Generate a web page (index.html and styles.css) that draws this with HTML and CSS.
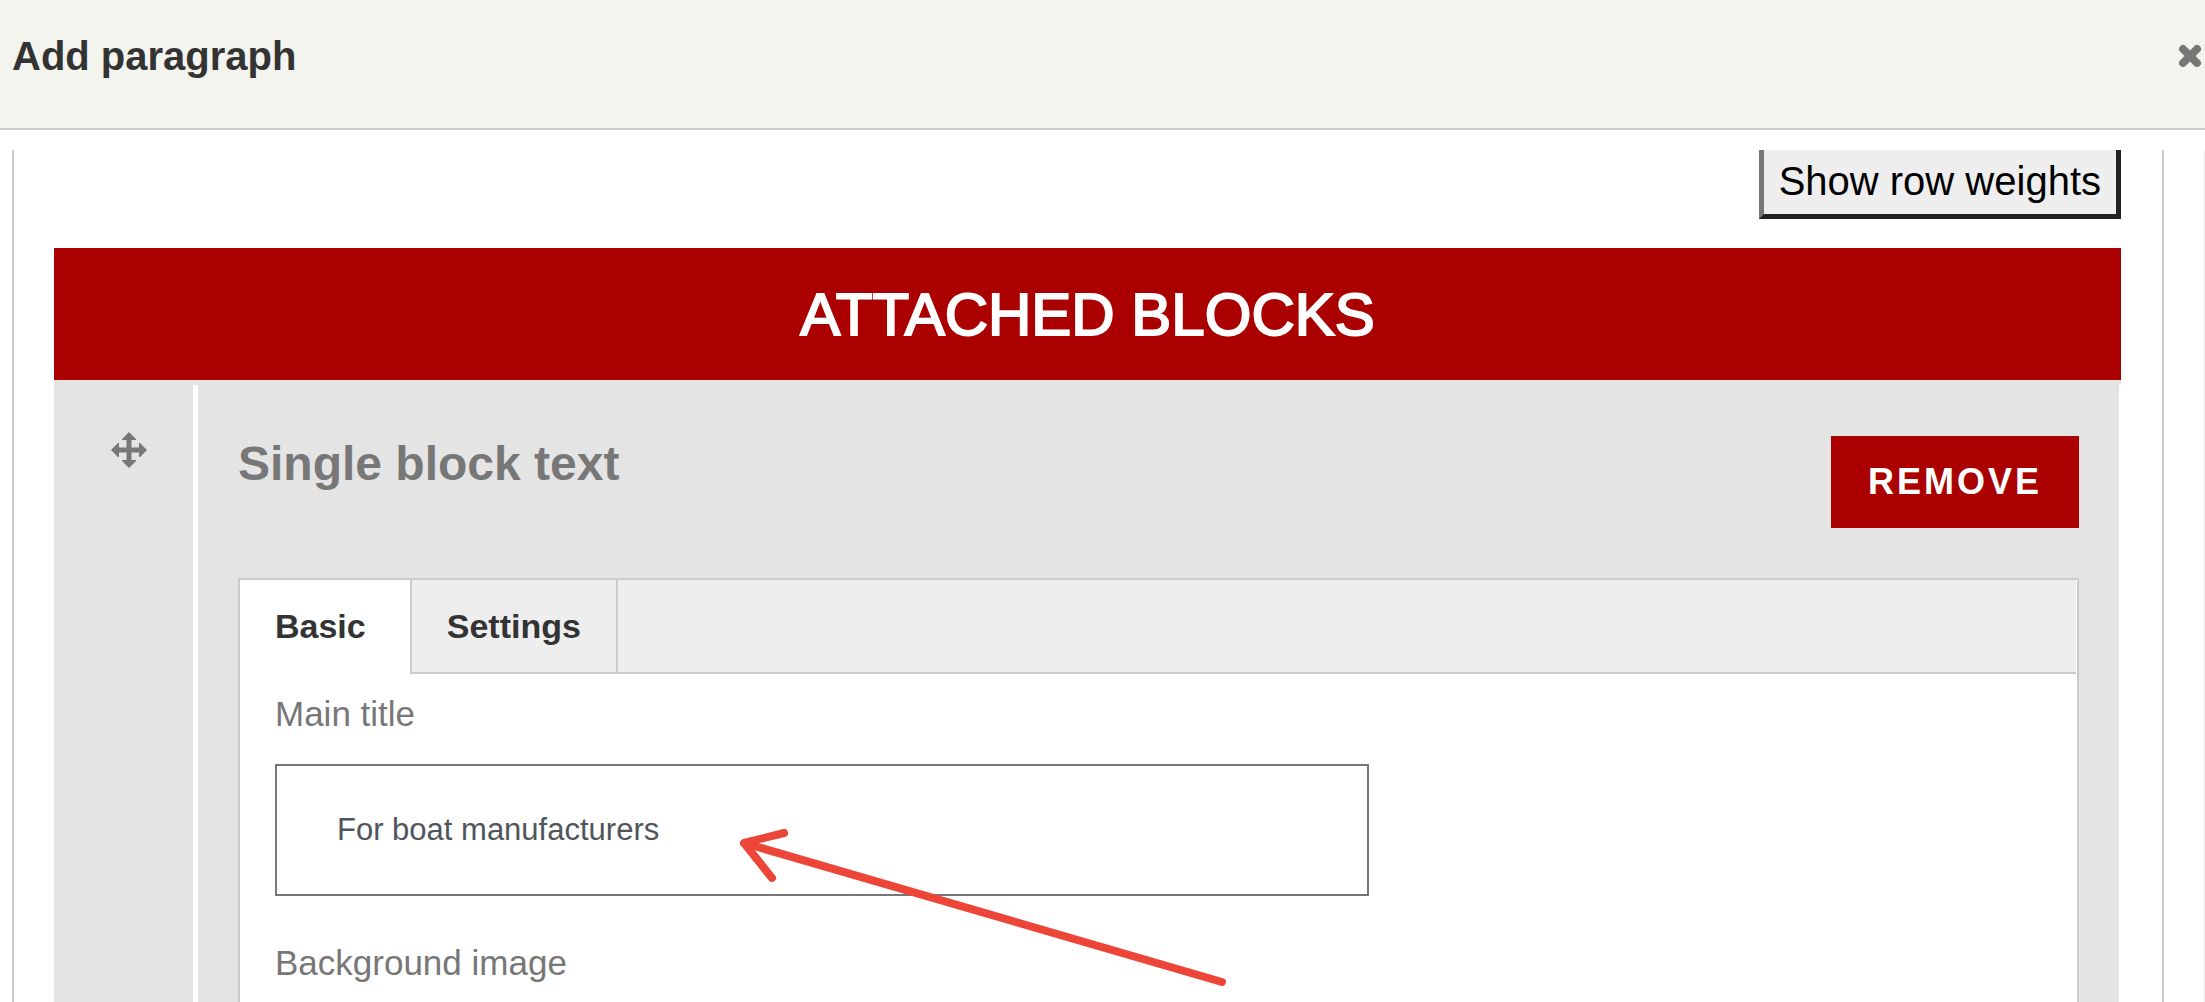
FILE: index.html
```html
<!DOCTYPE html>
<html lang="en">
<head>
    <meta charset="utf-8">
    <title>Add paragraph</title>
    <link rel="stylesheet" href="styles.css">
</head>
<body>
    <div class="dialog">
        <header class="dialog-titlebar">
            <h1 class="dialog-title">Add paragraph</h1>
            <button type="button" class="dialog-close" aria-label="Close">
                <svg width="24" height="24" viewBox="0 0 24 24">
                    <path d="M5 5L19 19M19 5L5 19" stroke="#777" stroke-width="8" stroke-linecap="round"/>
                </svg>
            </button>
        </header>
        <div class="dialog-content">
            <div class="field-wrapper">
                <div class="weight-toggle">
                    <button type="button" class="weight-button">Show row weights</button>
                </div>
                <table class="blocks">
                    <thead>
                        <tr>
                            <th colspan="2">ATTACHED BLOCKS</th>
                        </tr>
                    </thead>
                    <tbody>
                        <tr>
                            <td class="drag-cell">
                                <a href="#" class="drag-handle" aria-label="Drag to re-order">
                                    <svg width="36" height="36" viewBox="0 0 36 36">
                                        <path fill="#777" d="M18 0L25 7V8H20.500V15.500H28V11H29L36 18L29 25H28V20.500H20.500V28H25V29L18 36L11 29V28H15.500V20.500H8V25H7L0 18L7 11H8V15.500H15.500V8H11V7Z"/>
                                    </svg>
                                </a>
                            </td>
                            <td class="block-cell">
                                <div class="block-top">
                                    <h2 class="block-type">Single block text</h2>
                                    <button type="button" class="remove-button">REMOVE</button>
                                </div>
                                <div class="tabs">
                                    <nav class="tabs-menu">
                                        <a href="#basic" class="tab selected">Basic</a>
                                        <a href="#settings" class="tab">Settings</a>
                                    </nav>
                                    <div class="tabs-pane" id="basic">
                                        <label for="main-title">Main title</label>
                                        <div class="input-wrapper">
                                            <input type="text" id="main-title" value="For boat manufacturers">
                                            <svg class="arrow" width="490" height="160" viewBox="0 0 490 160">
                                                <path d="M484 154L6 15L46 5M6 15L34 50" fill="none" stroke="#ee4539" stroke-width="8" stroke-linecap="round" stroke-linejoin="round"/>
                                            </svg>
                                        </div>
                                        <div class="label">Background image</div>
                                    </div>
                                </div>
                            </td>
                        </tr>
                    </tbody>
                </table>
            </div>
        </div>
    </div>
</body>
</html>
```
FILE: styles.css
```css
* {
    box-sizing: border-box;
}

body {
    margin: 0;
    font-family: "Liberation Sans", Arial, sans-serif;
    font-size: 35px;
    line-height: 40px;
    color: #777;
    background: #fff;
}

h1, h2 {
    margin: 0;
}

button {
    font-family: inherit;
}

a {
    text-decoration: none;
}

svg {
    display: block;
}

.dialog {
    display: flex;
    flex-direction: column;
    height: 100vh;
    overflow: hidden;
}

/* title bar */
.dialog-titlebar {
    display: flex;
    flex: none;
    justify-content: space-between;
    align-items: flex-start;
    padding: 32px 3px 48px 12px;
    border-bottom: 2px solid #ccc;
    background: #f3f4ee;
}

.dialog-title {
    font-size: 40px;
    line-height: 48px;
    color: #333;
}

.dialog-close {
    padding: 12px 0;
    border: 0;
    background: none;
}

/* scrolled area */
.dialog-content {
    flex: 1;
    min-height: 0;
    margin-top: 20px;
    padding: 0 40px 0 12px;
    border-right: 1px solid #eee;
    overflow: hidden;
}

.field-wrapper {
    margin-top: -6px;
    padding: 0 41px 0 40px;
    border: solid #ccc;
    border-width: 0 2px;
}

.weight-toggle {
    display: flex;
    justify-content: flex-end;
    margin-bottom: 29px;
}

.weight-button {
    padding: 9px 15px;
    border: 5px solid;
    border-color: #777 #222 #222 #777;
    background: #eee;
    font-size: 40px;
    line-height: 47px;
    color: #000;
}

.blocks {
    width: 100%;
    border-spacing: 0;
}

.blocks th {
    padding: 33px 0 31px;
    border-bottom: 5px solid #e4e4e4;
    background: #a00;
    background-clip: padding-box;
    font-size: 60px;
    font-weight: normal;
    line-height: 68px;
    color: #fff;
    -webkit-text-stroke: 2px #fff;
}

.blocks td {
    padding: 0;
    background: #e4e4e4;
    vertical-align: top;
}

.blocks .drag-cell {
    width: 144px;
    padding: 47px 0 0 57px;
    border-right: 5px solid #fff;
}

.drag-handle {
    display: block;
    width: 36px;
}

.blocks .block-cell {
    padding: 51px 40px 0;
    border-right: 2px solid #fff;
    background-clip: padding-box;
}

.block-top {
    display: flex;
    justify-content: space-between;
    align-items: flex-start;
    margin-bottom: 50px;
}

.block-type {
    font-size: 48px;
    line-height: 56px;
}

.remove-button {
    padding: 26px 37px;
    border: 0;
    background: #a00;
    font-size: 36px;
    font-weight: bold;
    line-height: 40px;
    letter-spacing: 3px;
    color: #fff;
}

/* horizontal tabs */
.tabs {
    border: 2px solid #ccc;
    background: #fff;
}

.tabs-menu {
    display: flex;
    margin-right: 1px;
    border-bottom: 2px solid #ccc;
    background: #eee;
}

.tab {
    padding: 26px 35px;
    border-right: 2px solid #ccc;
    font-size: 34px;
    font-weight: bold;
    color: #333;
}

.tab.selected {
    margin-bottom: -2px;
    padding-right: 44px;
    background: #fff;
}

.tabs-pane {
    padding: 20px 38px 120px 35px;
}

.tabs-pane label,
.tabs-pane .label {
    display: block;
}

.input-wrapper {
    position: relative;
    width: 62%;
    margin: 30px 0 47px;
}

.input-wrapper input {
    display: block;
    width: 100%;
    height: 132px;
    padding: 0 60px;
    border: 2px solid #777;
    background: #fff;
    font-family: inherit;
    font-size: 31px;
    color: #50555c;
}

/* pointer over the title field */
.arrow {
    position: absolute;
    top: 64px;
    left: 463px;
}
```
